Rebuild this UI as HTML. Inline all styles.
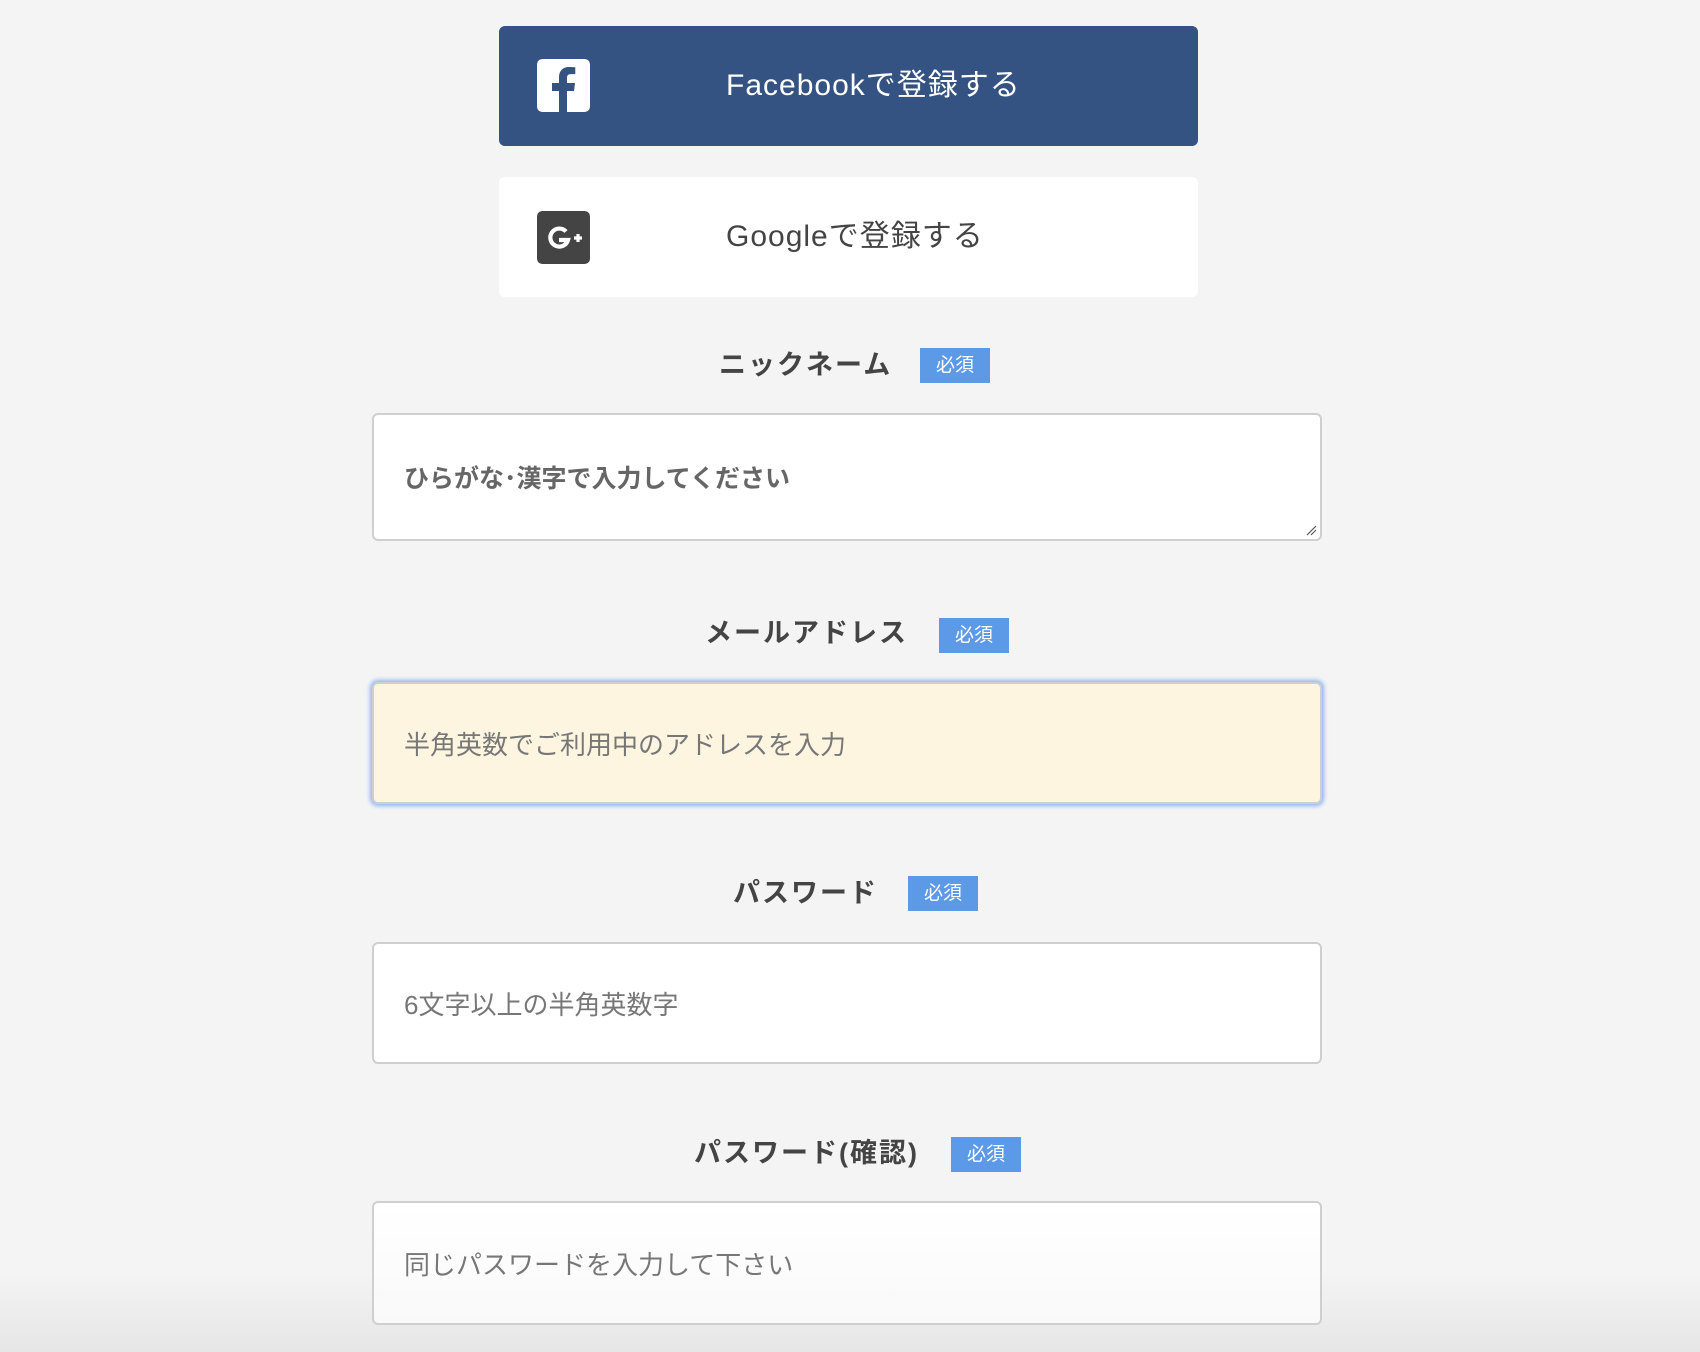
<!DOCTYPE html>
<html><head><meta charset="utf-8">
<style>
html,body{margin:0;padding:0}
body{width:1700px;height:1352px;position:relative;overflow:hidden;background:#f4f4f4;font-family:"Liberation Sans","Noto Sans CJK JP",sans-serif}
.bot{position:absolute;left:0;right:0;bottom:0;height:80px;background:linear-gradient(#f4f4f4,#e6e6e6)}
.btn{position:absolute;left:499px;width:699px;height:120px;border-radius:6px}
.fb{top:26px;background:#355382}
.gg{top:177px;background:#fff}
.ico{position:absolute;left:38px;top:33px;width:53px;height:53px;border-radius:5px}
.btxt{position:absolute;left:227px;top:0;line-height:120px;font-size:30px;letter-spacing:1px}
.lbl{position:absolute;height:36px;display:flex;align-items:center}
.lbl b{font-size:27px;letter-spacing:2px;color:#444;font-weight:bold}
.bd{position:absolute;width:70px;height:35px;background:#5c9ae8;color:#fff;font-size:19px;line-height:35px;text-align:center}
.in{position:absolute;left:372px;width:950px;box-sizing:border-box;border:2px solid #cfcfcf;border-radius:6px;background:#fff;font-size:26px;color:#777;padding-left:30px;display:flex;align-items:center}
</style></head><body>
<div class="bot"></div>
<div class="btn fb">
 <svg class="ico" viewBox="0 0 53 53" style="left:38px;top:33px"><rect width="53" height="53" rx="5" fill="#fff"/><path d="M30 53V32h7l1-8h-8v-5c0-2.3.7-3.9 4-3.9h4.3V8.3C37.6 8.2 35 8 32 8c-6 0-10 3.6-10 10.3V24h-7v8h7v21z" fill="#355382"/></svg>
 <div class="btxt" style="color:#fff">Facebookで登録する</div>
</div>
<div class="btn gg">
 <svg class="ico" viewBox="0 0 53 53" style="left:38px;top:34px"><rect width="53" height="53" rx="5" fill="#444"/><path d="M29 20.5a9 9 0 1 0 2 8.5h-9" fill="none" stroke="#fff" stroke-width="4.2"/><path d="M37 27h8M41 23v8" stroke="#fff" stroke-width="3.2"/></svg>
 <div class="btxt" style="color:#444">Googleで登録する</div>
</div>

<div class="lbl" style="left:719px;top:344px"><b>ニックネーム</b></div>
<div class="bd" style="left:920px;top:348px">必須</div>
<div class="in" style="top:413px;height:128px;color:#666;font-weight:bold;font-size:25px">ひらがな･漢字で入力してください
 <svg style="position:absolute;right:3px;bottom:3px" width="12" height="12"><path d="M2 11L11 2M6 11L11 6" stroke="#555" stroke-width="1.2"/></svg></div>

<div class="lbl" style="left:705px;top:612px"><b>メールアドレス</b></div>
<div class="bd" style="left:939px;top:618px">必須</div>
<div class="in" style="top:682px;height:122px;background:#fdf5df;box-shadow:0 0 4px 2px #8db4f0">半角英数でご利用中のアドレスを入力</div>

<div class="lbl" style="left:733px;top:872px"><b>パスワード</b></div>
<div class="bd" style="left:908px;top:876px">必須</div>
<div class="in" style="top:942px;height:122px">6文字以上の半角英数字</div>

<div class="lbl" style="left:694px;top:1132px"><b>パスワード(確認)</b></div>
<div class="bd" style="left:951px;top:1137px">必須</div>
<div class="in" style="top:1201px;height:124px;background:linear-gradient(#fff,#f9f9f9)">同じパスワードを入力して下さい</div>
</body></html>
